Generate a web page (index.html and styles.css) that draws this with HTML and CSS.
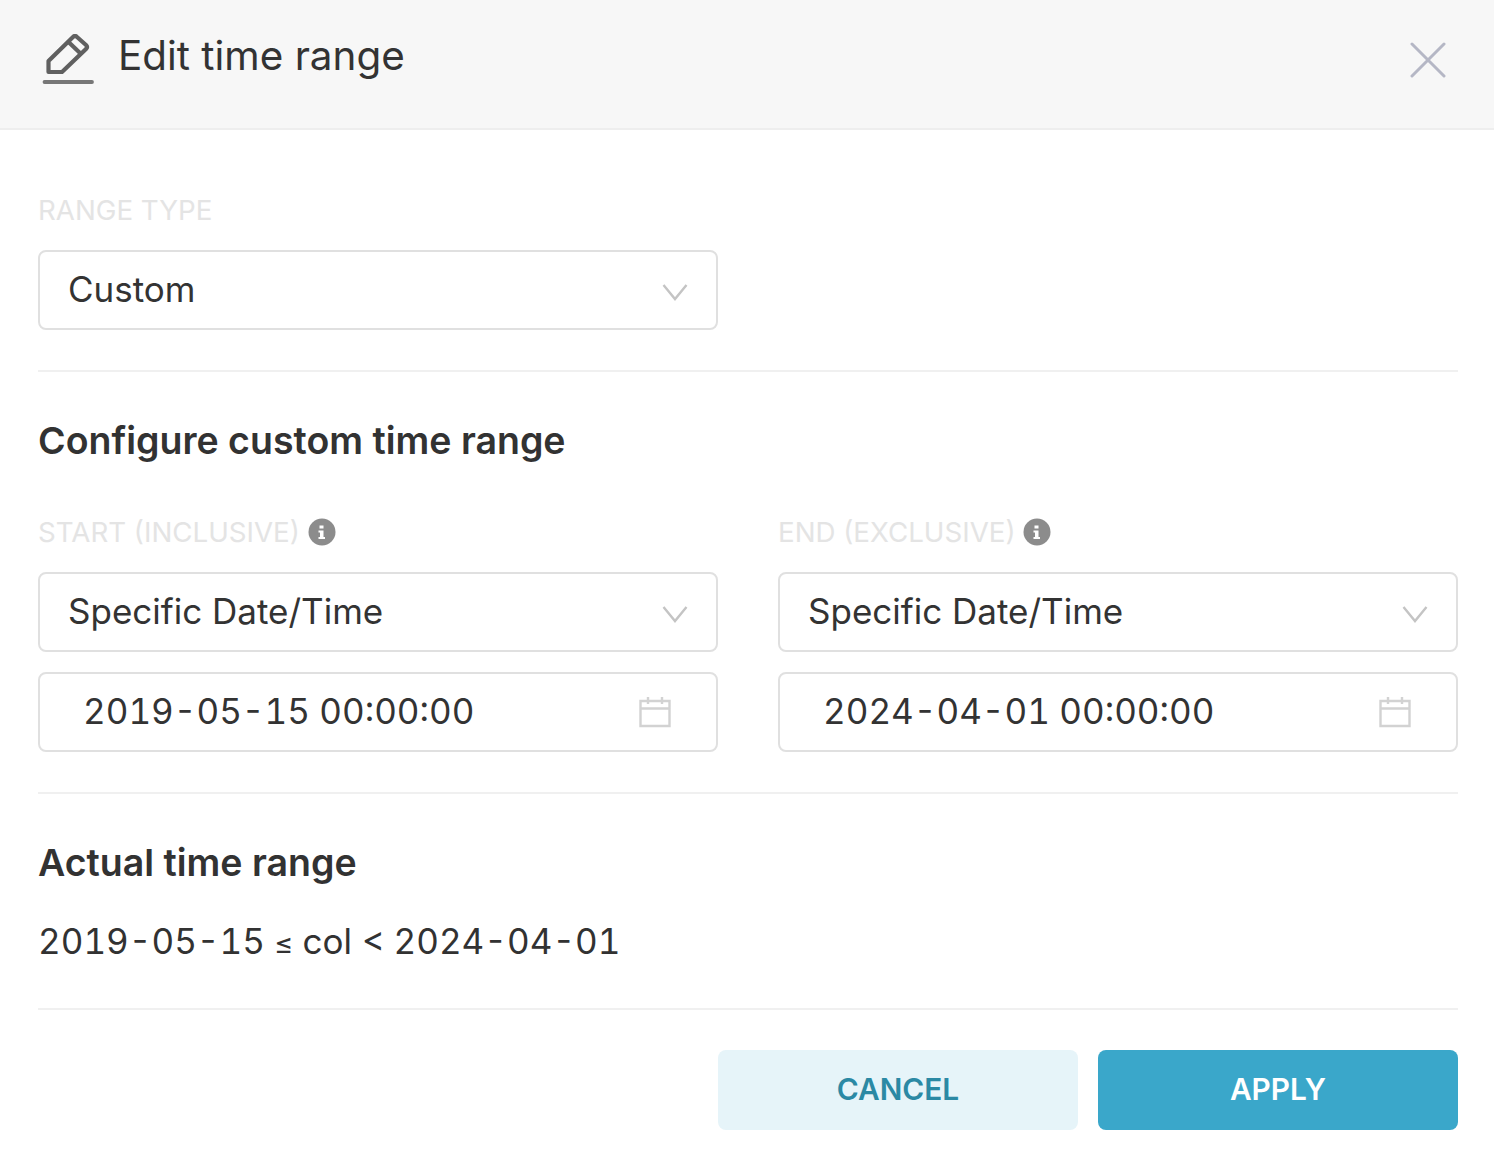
FILE: index.html
```html
<!DOCTYPE html>
<html>
<head>
  <meta charset="UTF-8">
  <title>Edit time range</title>
  <link rel="stylesheet" href="styles.css">
</head>
<body>
  <div class="modal">
    <header class="modal-header">
      <div class="modal-title">
        <svg class="edit-icon" width="52" height="52" viewBox="0 0 52 52" fill="none" stroke="#606060" stroke-width="4.200" stroke-linejoin="round">
          <path d="M6.500 38 V27 L31 3 Q33 1 35 3 L44 11 Q46 13 44 15 L20 38 Z"/>
          <path d="M26.500 8 L38 19"/>
          <path d="M2.500 48 H50" stroke="#777" stroke-width="3.800" stroke-linecap="round"/>
        </svg>
        <span>Edit time range</span>
      </div>
      <svg class="close-icon" width="36" height="36" viewBox="0 0 36 36" stroke="#b5b7c5" stroke-width="3" stroke-linecap="round">
        <path d="M2 2 L34 34 M34 2 L2 34"/>
      </svg>
    </header>

    <div class="modal-body">
      <section class="section section-first">
        <label class="field-label">RANGE TYPE</label>
        <div class="row">
          <div class="input select">
            <span>Custom</span>
            <svg class="chevron" width="26" height="18" viewBox="0 0 26 18" fill="none" stroke="#c4c4c4" stroke-width="2.400"><path d="M1.500 2 L13 16 L24.500 2"/></svg>
          </div>
        </div>
      </section>

      <section class="section">
        <h2 class="section-title">Configure custom time range</h2>
        <div class="row row-fields">
          <div class="col">
            <label class="field-label">START (INCLUSIVE)
              <svg class="info-icon" width="28" height="28" viewBox="0 0 28 28"><circle cx="14" cy="14" r="13.500" fill="#8c8c8c"/><path d="M11.500 7.500 h4 v3 h-4 Z M10.500 12.500 h5 v6.500 h1.500 v2 h-6.500 v-2 h1.500 v-4.500 h-1.500 Z" fill="#fff"/></svg>
            </label>
            <div class="input select">
              <span>Specific Date/Time</span>
              <svg class="chevron" width="26" height="18" viewBox="0 0 26 18" fill="none" stroke="#c4c4c4" stroke-width="2.400"><path d="M1.500 2 L13 16 L24.500 2"/></svg>
            </div>
            <div class="input date">
              <span class="date-value">2019-05-15 00:00:00</span>
              <svg class="calendar" width="32" height="32" viewBox="0 0 32 32" fill="none" stroke="#d2d2d2" stroke-width="2.400"><path d="M1.500 5 H30.500 V30 H1.500 Z M1.500 12.500 H30.500 M9 1 V8 M23 1 V8"/></svg>
            </div>
          </div>
          <div class="col">
            <label class="field-label">END (EXCLUSIVE)
              <svg class="info-icon" width="28" height="28" viewBox="0 0 28 28"><circle cx="14" cy="14" r="13.500" fill="#8c8c8c"/><path d="M11.500 7.500 h4 v3 h-4 Z M10.500 12.500 h5 v6.500 h1.500 v2 h-6.500 v-2 h1.500 v-4.500 h-1.500 Z" fill="#fff"/></svg>
            </label>
            <div class="input select">
              <span>Specific Date/Time</span>
              <svg class="chevron" width="26" height="18" viewBox="0 0 26 18" fill="none" stroke="#c4c4c4" stroke-width="2.400"><path d="M1.500 2 L13 16 L24.500 2"/></svg>
            </div>
            <div class="input date">
              <span class="date-value">2024-04-01 00:00:00</span>
              <svg class="calendar" width="32" height="32" viewBox="0 0 32 32" fill="none" stroke="#d2d2d2" stroke-width="2.400"><path d="M1.500 5 H30.500 V30 H1.500 Z M1.500 12.500 H30.500 M9 1 V8 M23 1 V8"/></svg>
            </div>
          </div>
        </div>
      </section>

      <section class="section section-last">
        <h2 class="section-title">Actual time range</h2>
        <p class="actual-range">2019-05-15 <span class="lte">≤</span> col &lt; 2024-04-01</p>
      </section>
    </div>

    <footer class="modal-footer">
      <button class="btn btn-cancel">CANCEL</button>
      <button class="btn btn-apply">APPLY</button>
    </footer>
  </div>
</body>
</html>
```

FILE: styles.css
```css
html, body { margin: 0; background: #fff; }
body { font-family: Inter, "Noto Sans", sans-serif; color: #323232; }

.modal { width: 1494px; height: 1166px; overflow: hidden; }

.modal-header {
  display: flex;
  align-items: center;
  justify-content: space-between;
  height: 128px;
  padding: 0 48px 0 42px;
  background: #f7f7f7;
  border-bottom: 2px solid #eeeeee;
  box-sizing: content-box;
}
.modal-title {
  display: flex;
  align-items: center;
  gap: 24px;
  font-size: 40.400px;
  line-height: 48px;
  color: #333;
  margin-top: -17px;
}
.edit-icon { margin-top: 9px; }
.close-icon { margin-top: -9px; }

.modal-body { padding: 0 36px 0 38px; }
.section { border-bottom: 2px solid #f0f0f0; padding-bottom: 40px; }
.section-first { padding-top: 66px; }
.section-last { padding-bottom: 42px; }
.section-title {
  margin: 45px 0 0;
  font-size: 37.500px;
  line-height: 48px;
  font-weight: 600;
  color: #323232;
}

.field-label {
  display: flex;
  align-items: center;
  gap: 8px;
  height: 28px;
  font-size: 27.700px;
  line-height: 28px;
  color: #e4e4e4;
}

.row { display: grid; grid-template-columns: 680px 680px; column-gap: 60px; margin-top: 26px; }
.row-fields { margin-top: 53px; }
.col { display: flex; flex-direction: column; }
.col .input { margin-top: 20px; }
.col .select { margin-top: 26px; }

.input {
  display: flex;
  align-items: center;
  justify-content: space-between;
  box-sizing: border-box;
  height: 80px;
  border: 2px solid #e0e0e0;
  border-radius: 8px;
  font-size: 35px;
  color: #333;
}
.select { padding: 0 28px 2px; }
.date { padding: 0 45px 2px 43px; }
.date-value { font-variant-numeric: tabular-nums; }
.chevron { margin-top: 6px; }
.calendar { margin-top: 2px; }

.actual-range {
  margin: 32px 0 0;
  font-size: 35px;
  line-height: 44px;
  color: #323232;
  font-variant-numeric: tabular-nums;
}
.lte { font-size: 29px; }

.modal-footer {
  display: flex;
  justify-content: flex-end;
  gap: 20px;
  padding: 40px 36px 0 38px;
}
.btn {
  width: 360px;
  height: 80px;
  border: 0;
  border-radius: 8px;
  padding: 0 0 3px;
  font-family: inherit;
  font-size: 29.800px;
  font-weight: 600;
}
.btn-cancel { background: #e6f4f9; color: #2b89a4; }
.btn-apply { background: #3aa7ca; color: #fff; }
```
